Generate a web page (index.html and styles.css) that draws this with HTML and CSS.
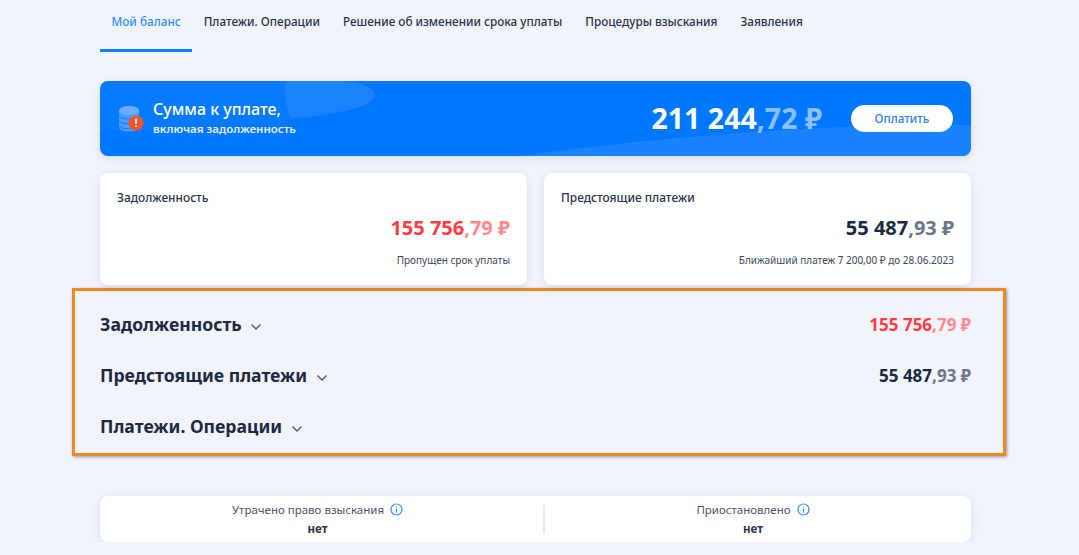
FILE: index.html
```html
<!DOCTYPE html>
<html lang="ru">

<head>
  <meta charset="UTF-8" />
  <title>Мой баланс</title>
  <link rel="stylesheet" href="styles.css">
</head>

<body>
  <div class="w">
    <!-- вкладки -->
    <ul class="tabs">
      <li class="active">Мой баланс</li>
      <li>Платежи. Операции</li>
      <li>Решение об изменении срока уплаты</li>
      <li>Процедуры взыскания</li>
      <li>Заявления</li>
    </ul>

    <!-- сумма к уплате -->
    <div class="banner">
      <svg class="banner-bg" viewBox="0 0 871 75" preserveAspectRatio="none">
        <path d="M184 0H236C268 0 277 10 274 17C268 31 215 38 130 45C75 50 30 50 0 50V0Z" fill="#1a82ff" opacity="0.3" />
        <path d="M186 0H236C268 0 277 10 274 17C268 27 235 33 190 37C186 25 183 10 186 0Z" fill="#1c83ff" />
        <path d="M420 75C560 55 740 42 871 44V65C871 71 867 75 861 75Z" fill="#1a82ff" />
      </svg>
      <svg class="coins" width="26" height="30" viewBox="0 0 26 30">
        <path d="M1 5.500V22C1 25 5.500 26.500 11 26.500C16.500 26.500 21 25 21 22V5.500Z" fill="#4c9dff" />
        <ellipse cx="11" cy="5.500" rx="10" ry="4.500" fill="#6aaeff" />
        <path d="M1 11.500C4 14.500 18 14.500 21 11.500M1 16.500C4 19.500 18 19.500 21 16.500M1 21.500C4 24.500 18 24.500 21 21.500" fill="none" stroke="#1a82ff" stroke-width="1.200" />
        <circle cx="18" cy="18" r="7.500" fill="#f0562a" />
        <path d="M18 13.800V18.800M18 20.800V22" stroke="#fff" stroke-width="1.700" fill="none" />
      </svg>
      <div class="banner-title">
        <div class="big">Сумма к уплате,</div>
        <div class="small">включая задолженность</div>
      </div>
      <div class="banner-sum">211 244<span>,72 ₽</span></div>
      <button class="pay">Оплатить</button>
    </div>

    <!-- карточки -->
    <div class="cards">
      <div class="card">
        <div class="card-title">Задолженность</div>
        <div class="card-sum red">155 756<span>,79 ₽</span></div>
        <div class="card-note">Пропущен срок уплаты</div>
      </div>
      <div class="card">
        <div class="card-title">Предстоящие платежи</div>
        <div class="card-sum dark">55 487<span>,93 ₽</span></div>
        <div class="card-note">Ближайший платеж 7 200,00 ₽ до 28.06.2023</div>
      </div>
    </div>

    <!-- выделенный блок -->
    <div class="marked">
      <div class="row">
        <div class="row-title">Задолженность
          <svg class="chevron" width="12" height="8" viewBox="0 0 12 8"><path d="M1.500 1.500L6 6L10.500 1.500" /></svg>
        </div>
        <div class="row-sum red">155 756<span>,79 ₽</span></div>
      </div>
      <div class="row">
        <div class="row-title">Предстоящие платежи
          <svg class="chevron" width="12" height="8" viewBox="0 0 12 8"><path d="M1.500 1.500L6 6L10.500 1.500" /></svg>
        </div>
        <div class="row-sum dark">55 487<span>,93 ₽</span></div>
      </div>
      <div class="row">
        <div class="row-title">Платежи. Операции
          <svg class="chevron" width="12" height="8" viewBox="0 0 12 8"><path d="M1.500 1.500L6 6L10.500 1.500" /></svg>
        </div>
      </div>
    </div>

    <!-- статусы -->
    <div class="status">
      <div class="status-item">
        <div class="status-name">Утрачено право взыскания
          <svg class="info" width="13" height="13" viewBox="0 0 13 13"><circle cx="6.500" cy="6.500" r="5.500" /><path d="M6.500 5.800V9.500M6.500 3.400V4.600" /></svg>
        </div>
        <div class="status-value">нет</div>
      </div>
      <div class="status-item">
        <div class="status-name">Приостановлено
          <svg class="info" width="13" height="13" viewBox="0 0 13 13"><circle cx="6.500" cy="6.500" r="5.500" /><path d="M6.500 5.800V9.500M6.500 3.400V4.600" /></svg>
        </div>
        <div class="status-value">нет</div>
      </div>
    </div>
  </div>
</body>

</html>
```

FILE: styles.css
```css
* {
  margin: 0;
  padding: 0;
  box-sizing: border-box;
}

body {
  background: #f1f4fa;
  color: #1b2a41;
  font-family: "Noto Sans", "Open Sans", sans-serif;
  overflow: hidden;
}

ul {
  list-style: none;
}

.w {
  width: 871px;
  margin-left: 100px;
}

.tabs {
  display: flex;
  height: 52px;
}

.tabs li {
  padding: 13px 11.500px 0;
  font-size: 11.750px;
  line-height: 16px;
  font-weight: 500;
  color: #27354a;
}

.tabs li.active {
  color: #2f8dff;
  border-bottom: 3px solid #0f83ff;
}

.banner {
  position: relative;
  display: flex;
  align-items: center;
  height: 75px;
  margin-top: 29px;
  padding: 0 18px 0 18px;
  background: #0077ff;
  border-radius: 8px;
  overflow: hidden;
  box-shadow: 0 2px 8px rgba(40, 60, 100, 0.12);
  color: #fff;
}

.banner-bg {
  position: absolute;
  left: 0;
  top: 0;
  width: 100%;
  height: 100%;
}

.coins,
.banner-title,
.banner-sum,
.pay {
  position: relative;
}

.coins {
  margin-right: 9px;
  margin-top: 2px;
}

.banner-title .big {
  font-size: 16px;
  line-height: 21px;
  font-weight: 500;
  margin-top: -2px;
}

.banner-title .small {
  font-size: 11.500px;
  line-height: 17px;
  font-weight: 600;
  color: #e3efff;
}

.banner-sum {
  margin-left: auto;
  margin-right: 29px;
  font-size: 28.500px;
  line-height: 36px;
  font-weight: 700;
  margin-top: -2px;
}

.banner-sum span {
  color: #8cc0ff;
}

.pay {
  width: 102px;
  height: 27px;
  padding-bottom: 2px;
  border: none;
  border-radius: 14px;
  background: #fff;
  color: #2f80f0;
  font: 500 11.700px "Noto Sans", sans-serif;
}

.cards {
  display: grid;
  grid-template-columns: 427px 427px;
  gap: 17px;
  margin-top: 17px;
}

.card {
  height: 112px;
  padding: 15px 17px 0;
  background: #fff;
  border-radius: 8px;
  box-shadow: 0 2px 8px rgba(40, 60, 100, 0.12);
}

.card-title {
  font-size: 11.900px;
  line-height: 18px;
  font-weight: 500;
  color: #27354a;
}

.card-sum {
  margin-top: 7px;
  text-align: right;
  font-size: 20px;
  line-height: 30px;
  font-weight: 700;
}

.card-note {
  margin-top: 10px;
  text-align: right;
  font-size: 10px;
  line-height: 14px;
  color: #39465a;
}

.red {
  color: #ff3d44;
}

.red span {
  color: #ff8a8e;
}

.dark {
  color: #1b2a41;
}

.dark span {
  color: #69778d;
}

/* оранжевая рамка шире колонки */
.marked {
  margin: 3px -35px 0 -28px;
  height: 168px;
  padding: 8px 32px 0 25px;
  border: 3px solid #ed8a26;
  box-shadow: 1px 1px 3px rgba(0, 0, 0, 0.4);
}

.row {
  display: flex;
  justify-content: space-between;
  align-items: center;
  height: 51px;
}

.row-title {
  margin-top: -2px;
  font-size: 17.600px;
  font-weight: 700;
  color: #1b2a41;
}

.chevron {
  margin-left: 4px;
  fill: none;
  stroke: #4a5668;
  stroke-width: 1.300;
}

.row-sum {
  font-size: 17px;
  font-weight: 700;
}

.status {
  display: grid;
  grid-template-columns: 435px 436px;
  height: 46px;
  margin-top: 40px;
  padding: 5px 0 3px;
  background: #fff;
  border-radius: 8px;
  box-shadow: 0 2px 8px rgba(40, 60, 100, 0.12);
}

.status-item {
  position: relative;
  text-align: center;
}

.status-item + .status-item::before {
  content: "";
  position: absolute;
  left: 8px;
  top: 4px;
  bottom: 5px;
  width: 2px;
  background: #e6eaf2;
}

.status-name {
  font-size: 11.500px;
  line-height: 18px;
  color: #4b5668;
}

.status-value {
  margin-top: 2px;
  font-size: 11.500px;
  line-height: 16px;
  font-weight: 700;
  color: #27354a;
}

.info {
  margin-left: 3px;
  vertical-align: -2px;
  fill: none;
  stroke: #2f8dff;
  stroke-width: 1.200;
}
```
